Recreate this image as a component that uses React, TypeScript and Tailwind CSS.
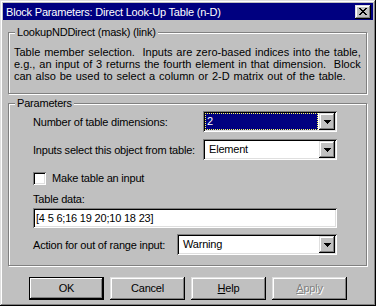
import React from "react";

const font = { fontFamily: '"Liberation Sans", Arial, sans-serif' };

function CloseGlyph() {
  const rows = [
    "XX....XX",
    ".XX..XX.",
    "..XXXX..",
    "...XX...",
    "..XXXX..",
    ".XX..XX.",
    "XX....XX",
  ];
  return (
    <svg width="8" height="7" viewBox="0 0 8 7" shapeRendering="crispEdges">
      {rows.flatMap((r, y) =>
        r.split("").map((c, x) => (c === "X" ? <rect key={`${x}-${y}`} x={x} y={y} width="1" height="1" fill="#000" /> : null))
      )}
    </svg>
  );
}

function Arrow() {
  return (
    <svg width="7" height="4" viewBox="0 0 7 4" shapeRendering="crispEdges">
      <rect x="0" y="0" width="7" height="1" fill="#000" />
      <rect x="1" y="1" width="5" height="1" fill="#000" />
      <rect x="2" y="2" width="3" height="1" fill="#000" />
      <rect x="3" y="3" width="1" height="1" fill="#000" />
    </svg>
  );
}

const sunken =
  "shadow-[inset_1px_1px_0_#808080,inset_-1px_-1px_0_#fff,inset_2px_2px_0_#000,inset_-2px_-2px_0_#dfdfdf]";
const raised =
  "shadow-[inset_-1px_-1px_0_#000,inset_1px_1px_0_#dfdfdf,inset_-2px_-2px_0_#808080,inset_2px_2px_0_#fff]";

function Combo({ value, selected, width }: { value: string; selected?: boolean; width: string }) {
  return (
    <div className={`${width} h-[21px] p-[2px] bg-white flex ${sunken}`}>
      {selected ? (
        <div className="flex-1 bg-[#000080] border border-dotted border-[#ffff60] text-white flex items-center pl-[1px] mr-[1px] leading-[13px]">
          {value}
        </div>
      ) : (
        <div className="flex-1 flex items-center pl-[4px] leading-[13px] text-black">{value}</div>
      )}
      <div className={`w-[16px] h-[17px] bg-[#c0c0c0] flex items-center justify-center ${raised}`}>
        <Arrow />
      </div>
    </div>
  );
}

function Button({ children, def, disabled }: { children: React.ReactNode; def?: boolean; disabled?: boolean }) {
  return (
    <div
      className={`w-[75px] h-[23px] bg-[#c0c0c0] flex items-center justify-center leading-[13px] ${
        def
          ? "shadow-[inset_0_0_0_1px_#000,inset_-2px_-2px_0_#000,inset_2px_2px_0_#fff,inset_-3px_-3px_0_#808080]"
          : raised
      } ${disabled ? "text-[#808080] [text-shadow:1px_1px_0_#fff]" : "text-black"}`}
    >
      {children}
    </div>
  );
}

export default function App() {
  return (
    <div
      className="w-[376px] h-[306px] bg-[#c0c0c0] p-[3px] text-[11px] tracking-[-0.2px] text-black shadow-[inset_-1px_-1px_0_#000,inset_1px_1px_0_#dfdfdf,inset_-2px_-2px_0_#808080,inset_2px_2px_0_#fff] flex flex-col"
      style={font}
    >
      <div className="h-[17px] bg-[#000080] text-white flex items-center justify-between pl-[3px] pr-[2px]">
        <span className="text-[11px] leading-[14px]">Block Parameters: Direct Look-Up Table (n-D)</span>
        <div className={`w-[16px] h-[14px] bg-[#c0c0c0] flex items-center justify-center ${raised}`}>
          <CloseGlyph />
        </div>
      </div>

      <fieldset className="mt-[6px] ml-[5px] w-[359px] p-0 m-0 border border-[#808080] shadow-[inset_1px_1px_0_#fff,1px_1px_0_#fff]">
        <legend className="ml-[6px] px-[2px] bg-[#c0c0c0] leading-[13px]">LookupNDDirect (mask) (link)</legend>
        <div className="pl-[5px] pt-[7px] pb-[11px] leading-[12px] whitespace-pre tracking-normal [word-spacing:0.8px]">
          {"Table member selection.  Inputs are zero-based indices into the table,\ne.g., an input of 3 returns the fourth element in that dimension.  Block\ncan also be used to select a column or 2-D matrix out of the table."}
        </div>
      </fieldset>

      <fieldset className="mt-[3px] ml-[5px] w-[359px] p-0 m-0 border border-[#808080] shadow-[inset_1px_1px_0_#fff,1px_1px_0_#fff]">
        <legend className="ml-[6px] px-[2px] bg-[#c0c0c0] leading-[13px]">Parameters</legend>
        <div className="pl-[24px] pt-[1px] pb-[10px] flex flex-col">
          <div className="flex items-center">
            <span className="w-[170px] pt-[2px] leading-[13px]">Number of table dimensions:</span>
            <Combo value="2" selected width="w-[134px]" />
          </div>
          <div className="flex items-center mt-[7px]">
            <span className="w-[170px] pt-[1px] leading-[13px]">Inputs select this object from table:</span>
            <Combo value="Element" width="w-[134px]" />
          </div>
          <div className="flex items-center mt-[12px]">
            <div className={`w-[13px] h-[13px] bg-white ${sunken}`} />
            <span className="ml-[6px] leading-[13px]">Make table an input</span>
          </div>
          <div className="mt-[8px] leading-[13px]">Table data:</div>
          <div className={`mt-[2px] w-[304px] h-[20px] bg-white flex items-center pl-[3px] leading-[13px] ${sunken}`}>
            [4 5 6;16 19 20;10 18 23]
          </div>
          <div className="flex items-center mt-[6px]">
            <span className="w-[144px] pt-[2px] leading-[13px]">Action for out of range input:</span>
            <Combo value="Warning" width="w-[160px]" />
          </div>
        </div>
      </fieldset>

      <div className="mt-[11px] ml-[26px] flex gap-[6px]">
        <Button def>OK</Button>
        <Button>Cancel</Button>
        <Button>
          <span>
            <span className="underline">H</span>elp
          </span>
        </Button>
        <Button disabled>
          <span>
            <span className="underline">A</span>pply
          </span>
        </Button>
      </div>
    </div>
  );
}
